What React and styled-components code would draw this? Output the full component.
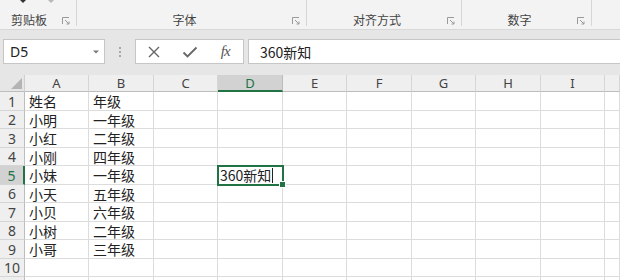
import React from "react";
import styled, { createGlobalStyle, css } from "styled-components";

const GlobalStyle = createGlobalStyle`
  html, body {
    margin: 0;
    padding: 0;
    background: #ffffff;
    overflow: hidden;
  }
  body {
    font-family: "Noto Sans CJK SC", "Noto Sans", sans-serif;
  }
`;

const GREEN = "#217346";

const Window = styled.div`
  width: 620px;
  height: 280px;
  overflow: hidden;
  display: flex;
  flex-direction: column;
`;

/* ribbon */
const Ribbon = styled.div`
  height: 29px;
  flex: none;
  display: flex;
  background: #f3f3f3;
  border-bottom: 1px solid #d8d8d8;
`;

const Group = styled.div`
  width: ${(p) => p.$w}px;
  flex: none;
  display: flex;
  align-items: flex-end;
  box-sizing: border-box;
  border-right: 1px solid #d6d6d6;
  margin-bottom: 3px;
  padding-right: 6px;
`;

const GroupBody = styled.div`
  flex: 1;
  height: 100%;
  display: flex;
  flex-direction: column;
  align-items: center;
  justify-content: space-between;
`;

const TopBits = styled.div`
  height: 4px;
  align-self: stretch;
  display: flex;
  gap: 18px;
  padding-left: ${(p) => p.$pad || 0}px;
`;

const GroupLabel = styled.span`
  font-size: 12px;
  line-height: 13px;
  color: #444;
  padding-right: ${(p) => p.$shift || 0}px;
`;

const Launcher = () => (
  <svg width="8" height="8" viewBox="0 0 8 8" style={{ marginBottom: 1 }}>
    <path d="M0.5 7V0.5H7" fill="none" stroke="#9a9a9a" strokeWidth="1" />
    <path d="M3 3L7 7M7 4.5V7H4.5" fill="none" stroke="#9a9a9a" strokeWidth="1" />
  </svg>
);

/* formula bar */
const FormulaStrip = styled.div`
  height: 45px;
  flex: none;
  box-sizing: border-box;
  background: #e6e6e6;
  padding: 9px 0 11px 3px;
  display: flex;
  align-items: stretch;
`;

const Box = styled.div`
  background: #ffffff;
  border: 1px solid #c6c6c6;
  box-sizing: border-box;
  display: flex;
  align-items: center;
  ${(p) =>
    p.$w
      ? css`
          width: ${p.$w}px;
          flex: none;
        `
      : css`
          flex: 1;
          margin-left: 4px;
          border-right: none;
        `}
`;

const NameText = styled.span`
  flex: 1;
  padding-left: 6px;
  font-family: "Noto Sans", "Noto Sans CJK SC", sans-serif;
  font-size: 14px;
  color: #222;
`;

const Dots = styled.div`
  width: 30px;
  flex: none;
  display: flex;
  flex-direction: column;
  align-items: center;
  justify-content: center;
  gap: 2px;
  span {
    width: 2px;
    height: 2px;
    background: #a8a8a8;
  }
`;

const ToolBtn = styled.div`
  flex: 1;
  display: flex;
  align-items: center;
  justify-content: center;
`;

const Fx = styled.span`
  font-family: "Liberation Serif", serif;
  font-style: italic;
  font-size: 15px;
  color: #555;
  letter-spacing: -1px;
`;

const FormulaText = styled.span`
  padding-left: 11px;
  font-size: 14px;
  color: #222;
`;

/* sheet */
const colWidths = [25, 64, 65, 64, 65, 64, 65, 64, 65, 64];
const rowHeights = [17, 19, 18, 19, 18, 19, 18, 19, 18, 19, 18, 19];

const Sheet = styled.div`
  flex: 1;
  display: grid;
  grid-template-columns: ${colWidths.map((w) => w + "px").join(" ")} 1fr;
  grid-template-rows: ${rowHeights.map((h) => h + "px").join(" ")};
  background: #ffffff;
`;

const Corner = styled.div`
  background: #e6e6e6;
  border-right: 1px solid #cfcfcf;
  border-bottom: 1px solid #bdbdbd;
  display: flex;
  align-items: flex-end;
  justify-content: flex-end;
  padding: 0 2px 2px 0;
`;

const ColHead = styled.div`
  background: ${(p) => (p.$sel ? "#d2d2d2" : "#efefef")};
  color: ${(p) => (p.$sel ? GREEN : "#444")};
  border-right: 1px solid ${(p) => (p.$sel ? "#bcbcbc" : "#d5d5d5")};
  border-bottom: ${(p) => (p.$sel ? `2px solid ${GREEN}` : "1px solid #bdbdbd")};
  font-family: "Noto Sans", sans-serif;
  font-size: 13px;
  display: flex;
  align-items: center;
  justify-content: center;
  box-sizing: border-box;
`;

const RowHead = styled.div`
  background: ${(p) => (p.$sel ? "#d2d2d2" : "#efefef")};
  color: ${(p) => (p.$sel ? GREEN : "#444")};
  border-right: ${(p) => (p.$sel ? `2px solid ${GREEN}` : "1px solid #bdbdbd")};
  border-bottom: 1px solid #d5d5d5;
  font-family: "Noto Sans", sans-serif;
  font-size: 14px;
  display: flex;
  align-items: center;
  justify-content: center;
  box-sizing: border-box;
`;

const Cell = styled.div`
  position: relative;
  border-right: 1px solid #dcdcdc;
  border-bottom: 1px solid #dcdcdc;
  box-sizing: border-box;
  font-size: 14px;
  color: #222;
  display: flex;
  align-items: center;
  padding-left: 4px;
  white-space: nowrap;
  ${(p) =>
    p.$active &&
    css`
      outline: 2px solid ${GREEN};
      outline-offset: -1px;
      padding-left: 2px;
      z-index: 1;
      &::after {
        content: "";
        position: absolute;
        right: -4px;
        bottom: -4px;
        width: 5px;
        height: 5px;
        background: ${GREEN};
        border: 1px solid #fff;
      }
    `}
`;

const Caret = styled.span`
  display: inline-block;
  width: 1px;
  height: 15px;
  background: #222;
  margin-left: 1px;
`;

const cols = ["A", "B", "C", "D", "E", "F", "G", "H", "I", ""];
const data = [
  ["姓名", "年级"],
  ["小明", "一年级"],
  ["小红", "二年级"],
  ["小刚", "四年级"],
  ["小妹", "一年级"],
  ["小天", "五年级"],
  ["小贝", "六年级"],
  ["小树", "二年级"],
  ["小哥", "三年级"],
  ["", ""],
  ["", ""],
];

export default function App() {
  return (
    <Window>
      <GlobalStyle />
      <Ribbon>
        <Group $w={77}>
          <GroupBody>
            <TopBits $pad={18}>
              <svg width="10" height="4" viewBox="0 0 10 4">
                <path d="M2 0L5 3L8 0Z" fill="#333" />
              </svg>
              <svg width="10" height="4" viewBox="0 0 10 4">
                <path d="M2 0L5 3L8 0Z" fill="#b8b8b8" />
              </svg>
            </TopBits>
            <GroupLabel $shift={4}>剪贴板</GroupLabel>
          </GroupBody>
          <Launcher />
        </Group>
        <Group $w={230}>
          <GroupBody>
            <TopBits />
            <GroupLabel>字体</GroupLabel>
          </GroupBody>
          <Launcher />
        </Group>
        <Group $w={155}>
          <GroupBody>
            <TopBits />
            <GroupLabel>对齐方式</GroupLabel>
          </GroupBody>
          <Launcher />
        </Group>
        <Group $w={130}>
          <GroupBody>
            <TopBits />
            <GroupLabel>数字</GroupLabel>
          </GroupBody>
          <Launcher />
        </Group>
      </Ribbon>

      <FormulaStrip>
        <Box $w={102}>
          <NameText>D5</NameText>
          <svg width="16" height="8" viewBox="0 0 16 8">
            <path d="M5 2.5L8 5.5L11 2.5Z" fill="#777" />
          </svg>
        </Box>
        <Dots>
          <span />
          <span />
          <span />
        </Dots>
        <Box $w={109}>
          <ToolBtn>
            <svg width="14" height="14" viewBox="0 0 14 14">
              <path d="M2 2L12 12M12 2L2 12" stroke="#666" strokeWidth="1.4" />
            </svg>
          </ToolBtn>
          <ToolBtn>
            <svg width="16" height="14" viewBox="0 0 16 14">
              <path d="M1.5 7.5L5.5 11.5L14.5 2.5" fill="none" stroke="#666" strokeWidth="1.8" />
            </svg>
          </ToolBtn>
          <ToolBtn>
            <Fx>fx</Fx>
          </ToolBtn>
        </Box>
        <Box>
          <FormulaText>360新知</FormulaText>
        </Box>
      </FormulaStrip>

      <Sheet>
        <Corner>
          <svg width="11" height="11" viewBox="0 0 11 11">
            <path d="M11 0V11H0Z" fill="#b4b4b4" />
          </svg>
        </Corner>
        {cols.map((c, i) => (
          <ColHead key={"h" + i} $sel={c === "D"}>
            {c}
          </ColHead>
        ))}
        {data.map((row, r) => (
          <React.Fragment key={r}>
            <RowHead $sel={r === 4}>{r + 1}</RowHead>
            {cols.map((c, ci) => {
              const active = r === 4 && ci === 3;
              return (
                <Cell key={ci} $active={active}>
                  {active ? (
                    <>
                      360新知
                      <Caret />
                    </>
                  ) : (
                    row[ci] || ""
                  )}
                </Cell>
              );
            })}
          </React.Fragment>
        ))}
      </Sheet>
    </Window>
  );
}
